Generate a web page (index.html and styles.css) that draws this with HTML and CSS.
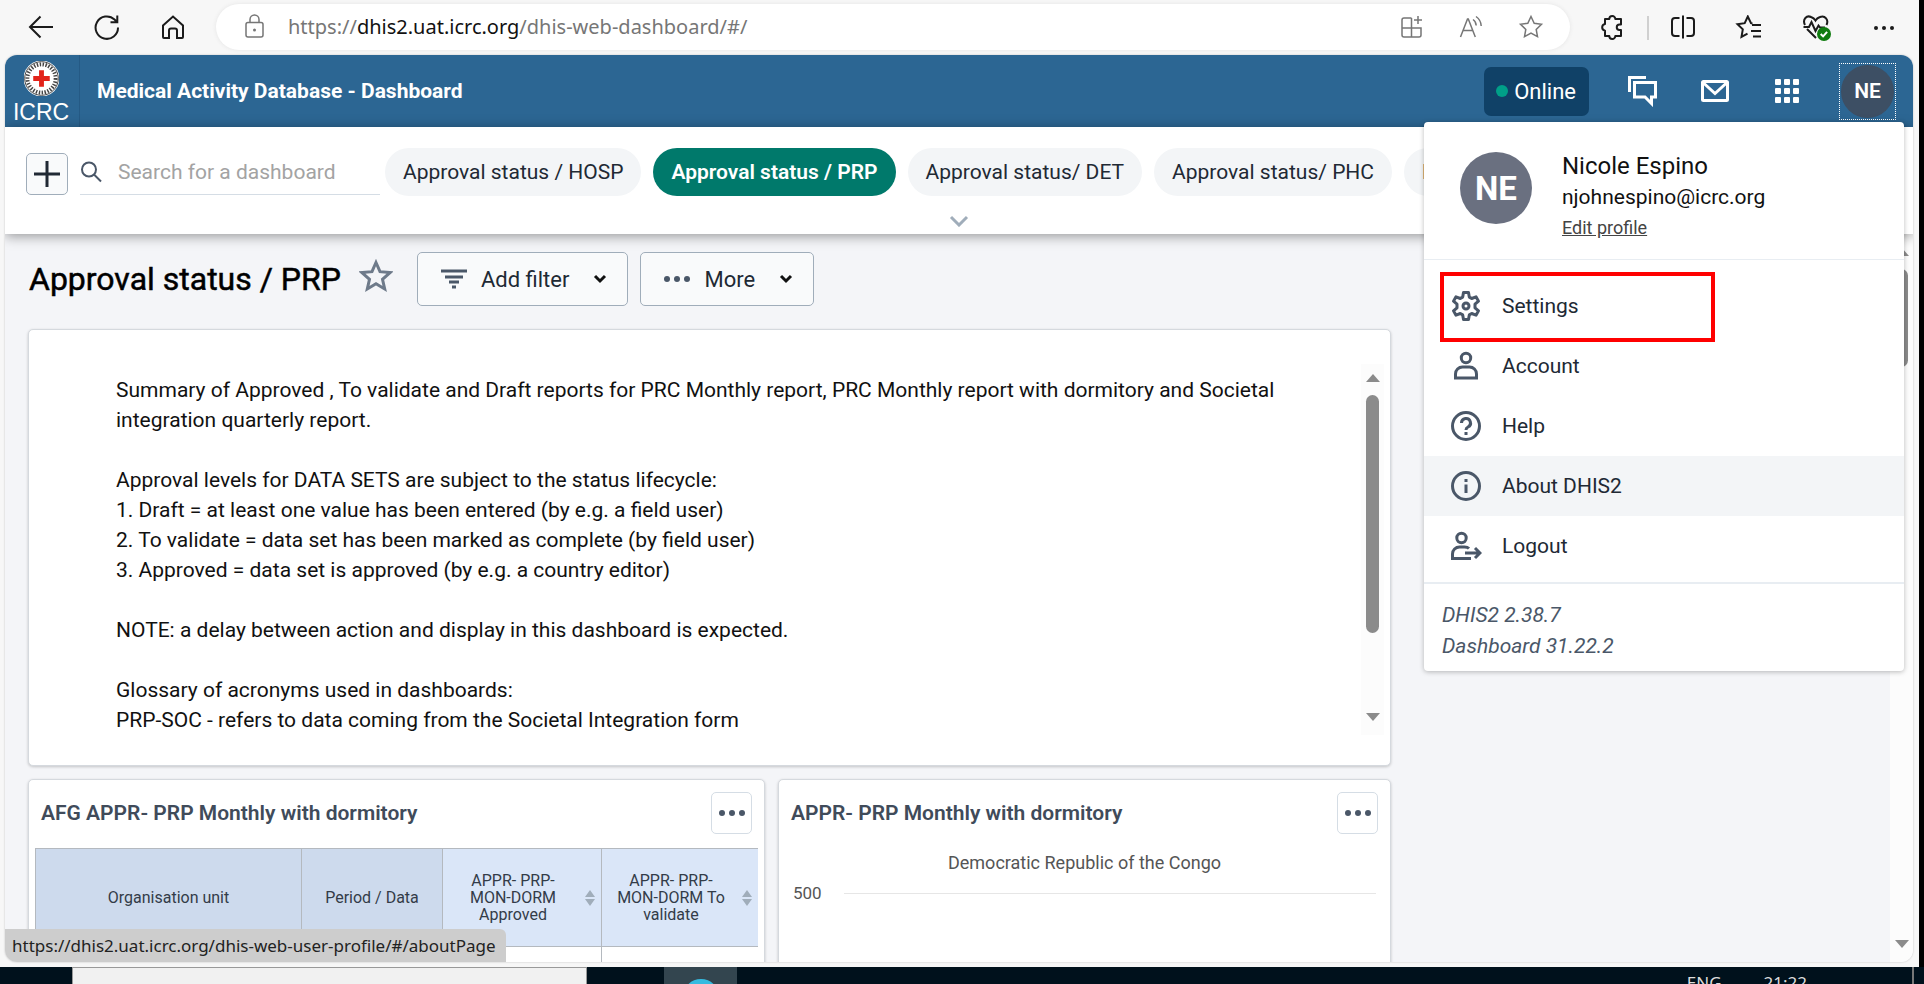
FILE: index.html
```html
<!DOCTYPE html>
<html lang="en">
<head>
<meta charset="utf-8">
<title>Medical Activity Database - Dashboard</title>
<link rel="stylesheet" href="styles.css">
</head>
<body>
<div class="desktop">
<div class="browser">
  <div class="toolbar">
    <nav class="toolbar-nav" aria-label="Browser">
      <button class="icon-btn" aria-label="Back"><svg width="26" height="26" viewBox="0 0 26 26"><path d="M25 12H2M12.500 1.500L2 12l10.500 10.500"/></svg></button>
      <button class="icon-btn" aria-label="Reload"><svg width="26" height="26" viewBox="0 0 26 26"><path d="M24 12.500A11.200 11.200 0 1 1 20.500 4.500L23 7M23.300 .5V7.300H16.500"/></svg></button>
      <button class="icon-btn" aria-label="Home"><svg width="26" height="26" viewBox="0 0 26 26"><path d="M3 10.500L13 1.500l10 9V22a1 1 0 0 1-1 1h-5v-7.500a2 2 0 0 0-2-2h-4a2 2 0 0 0-2 2V23H4a1 1 0 0 1-1-1z"/></svg></button>
    </nav>
    <div class="address">
      <svg class="grey" width="22" height="26" viewBox="0 0 22 26"><rect x="2" y="8.500" width="17" height="14.500" rx="2"/><path d="M6 8.500V5.500a4.500 4.500 0 0 1 9 0v3"/><circle class="fill" cx="10.500" cy="16" r="1.500"/></svg>
      <p class="url">https://<b>dhis2.uat.icrc.org</b>/dhis-web-dashboard/#/</p>
      <button class="icon-btn grey" aria-label="Apps"><svg width="24" height="24" viewBox="0 0 24 24"><path d="M11.500 3H4a2 2 0 0 0-2 2v15a2 2 0 0 0 2 2h15a2 2 0 0 0 2-2v-7H2M11.500 3v19M18 1v8M14 5h8"/></svg></button>
      <button class="icon-btn grey" aria-label="Read aloud"><svg width="24" height="24" viewBox="0 0 24 24"><path d="M1.500 22L8.500 4h.8l7 18M4.200 15.500h9.500M14 4.500q3 2 3.200 6M17 1.500q5 3.500 5.200 9.500"/></svg></button>
      <button class="icon-btn grey" aria-label="Favourite"><svg width="26" height="26" viewBox="0 0 26 26"><path d="M13 2.500l3.200 6.700 7.300 1-5.300 5.200 1.300 7.300-6.500-3.500-6.500 3.500 1.300-7.300-5.300-5.200 7.300-1z"/></svg></button>
    </div>
    <div class="toolbar-tools">
      <button class="icon-btn" aria-label="Extensions"><svg width="26" height="26" viewBox="0 0 26 26"><path stroke-linejoin="round" d="M5 4h4.300a3 3 0 0 1 6 0H21v5.500h-1.500a2.700 2.700 0 0 0 0 5.500H21v6h-5.700a3 3 0 0 1-6 0H5v-5.300a3.400 3.400 0 0 1 0-6.700z"/></svg></button>
      <span class="toolbar-sep"></span>
      <button class="icon-btn" aria-label="Split screen"><svg width="26" height="26" viewBox="0 0 26 26"><path d="M9.500 3H5a3 3 0 0 0-3 3v12a3 3 0 0 0 3 3h4.500M13 .5v23M16.500 3H21a3 3 0 0 1 3 3v12a3 3 0 0 1-3 3h-4.500"/></svg></button>
      <button class="icon-btn" aria-label="Favourites"><svg width="28" height="26" viewBox="0 0 26 26"><path d="M16.500 8.500l-1.500-.3-3.200-6.700-3.100 6.700-7.200 1 5.300 5.200-1.300 7.500 6-3.300M16 10h9M15 16h10M17 21.500h8"/></svg></button>
      <button class="icon-btn" aria-label="Browser essentials"><svg width="30" height="28" viewBox="0 0 30 28"><path d="M3 11C0 5 5 1 9 3q3 1 4.500 3.500Q15 4 18 3c5-2 9 3 6.500 8M5 15l9 9M1.500 13H7l2.500-5 4 9 3-5.500 1.500 2h5"/><circle cx="22" cy="20" r="7" class="ok"/><path class="tick" d="M18.700 20l2.400 2.400 4-4.500"/></svg></button>
      <button class="icon-btn" aria-label="More tools"><svg width="26" height="26" viewBox="0 0 26 26"><g class="fill"><circle cx="5" cy="13" r="2"/><circle cx="13" cy="13" r="2"/><circle cx="21" cy="13" r="2"/></g></svg></button>
    </div>
  </div>

  <div class="page">
    <header class="header">
      <a class="logo" href="#" aria-label="ICRC">
        <svg width="35" height="35" viewBox="0 0 36 36"><circle cx="18" cy="18" r="17.500" fill="#fff"/><circle cx="18" cy="18" r="14.500" fill="none" stroke="#444" stroke-width="4" stroke-dasharray="1.500 1.500"/><circle cx="18" cy="18" r="17.300" fill="none" stroke="#444" stroke-width="1"/><path d="M15.500 9.500h5v6h6v5h-6v6h-5v-6h-6v-5h6z" fill="#e2231a" stroke="none"/></svg>
        <span>ICRC</span>
      </a>
      <h1 class="app-title">Medical Activity Database - Dashboard</h1>
      <span class="online"><i></i>Online</span>
      <nav class="header-icons" aria-label="Apps">
        <button class="icon-btn" aria-label="Messages"><svg width="32" height="32" viewBox="0 0 32 32"><path d="M2.500 17V2.500H19M7.500 7.500h21v14.500h-4v6.500L18 22H7.500z"/></svg></button>
        <button class="icon-btn" aria-label="Mail"><svg width="32" height="32" viewBox="0 0 32 32"><rect x="3.500" y="6.500" width="25" height="19" rx="1"/><path d="M4 7.500l12 11 12-11"/></svg></button>
        <button class="icon-btn" aria-label="Applications"><svg width="32" height="32" viewBox="0 0 32 32"><g class="fill"><rect x="4" y="4" width="6" height="6" rx="1"/><rect x="13" y="4" width="6" height="6" rx="1"/><rect x="22" y="4" width="6" height="6" rx="1"/><rect x="4" y="13" width="6" height="6" rx="1"/><rect x="13" y="13" width="6" height="6" rx="1"/><rect x="22" y="13" width="6" height="6" rx="1"/><rect x="4" y="22" width="6" height="6" rx="1"/><rect x="13" y="22" width="6" height="6" rx="1"/><rect x="22" y="22" width="6" height="6" rx="1"/></g></svg></button>
      </nav>
      <button class="profile"><span>NE</span></button>
    </header>

    <section class="dash-bar">
      <div class="dash-row">
        <button class="add" aria-label="New dashboard"><svg width="28" height="28" viewBox="0 0 28 28"><path d="M14 1v26M1 14h26"/></svg></button>
        <label class="search"><svg width="22" height="22" viewBox="0 0 22 22"><circle cx="9" cy="8.500" r="7"/><path d="M14 13.500l7 7"/></svg><input type="text" placeholder="Search for a dashboard" aria-label="Search for a dashboard"></label>
        <a class="chip" href="#">Approval status / HOSP</a>
        <a class="chip active" href="#">Approval status / PRP</a>
        <a class="chip" href="#">Approval status/ DET</a>
        <a class="chip" href="#">Approval status/ PHC</a>
        <a class="chip" href="#">PRP</a>
      </div>
      <button class="expand" aria-label="Show more dashboards"><svg width="20" height="12" viewBox="0 0 20 12"><path d="M2 2l8 8 8-8"/></svg></button>
    </section>

    <main class="content">
      <div class="board">
        <div class="title-row">
          <h2>Approval status / PRP</h2>
          <button class="icon-btn star" aria-label="Star dashboard"><svg width="34" height="34" viewBox="0 0 34 34"><path d="M17 3.500l4 9.200 10 .9-7.500 6.700 2.200 9.700-8.700-5.200L8.300 30l2.200-9.700L3 13.600l10-.9z"/></svg></button>
          <button class="btn"><svg width="28" height="20" viewBox="0 0 28 20"><path d="M1 2h26M5 8h18M9 13h10M12 18h4"/></svg>Add filter<svg class="caret" width="14" height="10" viewBox="0 0 14 10"><path d="M2 2l5 5 5-5"/></svg></button>
          <button class="btn"><svg class="dots" width="28" height="8" viewBox="0 0 28 8"><circle cx="4" cy="4" r="3"/><circle cx="14" cy="4" r="3"/><circle cx="24" cy="4" r="3"/></svg>More<svg class="caret" width="14" height="10" viewBox="0 0 14 10"><path d="M2 2l5 5 5-5"/></svg></button>
        </div>
        <article class="card text-card">
          <div class="text-body">
            <p>Summary of Approved , To validate and Draft reports for PRC Monthly report, PRC Monthly report with dormitory and Societal integration quarterly report.</p>
            <p>Approval levels for DATA SETS are subject to the status lifecycle:<br>1. Draft = at least one value has been entered (by e.g. a field user)<br>2. To validate = data set has been marked as complete (by field user)<br>3. Approved = data set is approved (by e.g. a country editor)</p>
            <p>NOTE: a delay between action and display in this dashboard is expected.</p>
            <p>Glossary of acronyms used in dashboards:<br>PRP-SOC - refers to data coming from the Societal Integration form</p>
          </div>
          <div class="scroll"><i class="up"></i><i class="thumb"></i><i class="down"></i></div>
        </article>
        <div class="cards">
          <article class="card">
            <div class="card-head"><h3>AFG APPR- PRP Monthly with dormitory</h3><button class="card-menu" aria-label="Item menu"><svg class="dots" width="28" height="8" viewBox="0 0 28 8"><circle cx="4" cy="4" r="3"/><circle cx="14" cy="4" r="3"/><circle cx="24" cy="4" r="3"/></svg></button></div>
            <table class="pivot">
              <thead><tr><th class="dim c1">Organisation unit</th><th class="dim c2">Period / Data</th>
              <th class="c3"><div>APPR- PRP-MON-DORM Approved<span class="sort"></span></div></th><th><div>APPR- PRP-MON-DORM To validate<span class="sort"></span></div></th></tr></thead>
              <tbody><tr><td></td><td></td><td></td><td></td></tr></tbody>
            </table>
          </article>
          <article class="card">
            <div class="card-head"><h3>APPR- PRP Monthly with dormitory</h3><button class="card-menu" aria-label="Item menu"><svg class="dots" width="28" height="8" viewBox="0 0 28 8"><circle cx="4" cy="4" r="3"/><circle cx="14" cy="4" r="3"/><circle cx="24" cy="4" r="3"/></svg></button></div>
            <p class="chart-title">Democratic Republic of the Congo</p>
            <div class="axis"><span>500</span><i></i></div>
          </article>
        </div>
      </div>
      <div class="scroll page-scroll"><i class="up"></i><i class="thumb"></i><i class="down"></i></div>
    </main>
    <div class="status">https://dhis2.uat.icrc.org/dhis-web-user-profile/#/aboutPage</div>
  </div>

  <aside class="menu">
    <div class="user">
      <span class="avatar">NE</span>
      <div><p class="name">Nicole Espino</p><p class="mail">njohnespino@icrc.org</p><a href="#">Edit profile</a></div>
    </div>
    <nav class="items" aria-label="Profile">
      <a href="#"><svg width="32" height="32" viewBox="0 0 32 32"><path stroke-linejoin="round" d="M13.500 2.500h5l.8 4.600 2.400 1.400 4.300-1.700 2.500 4.400-3.500 3v3.600l3.500 3-2.500 4.400-4.300-1.700-2.400 1.400-.8 4.600h-5l-.8-4.600-2.400-1.400L6 25.200l-2.500-4.400 3.500-3v-3.600l-3.500-3L6 6.800l4.300 1.700 2.400-1.400z"/><circle cx="16" cy="16" r="3"/></svg>Settings</a>
      <a href="#"><svg width="32" height="32" viewBox="0 0 32 32"><circle cx="16" cy="8" r="4.700"/><path d="M5.500 28v-4a7 7 0 0 1 7-7h7a7 7 0 0 1 7 7v4z"/></svg>Account</a>
      <a href="#"><svg width="32" height="32" viewBox="0 0 32 32"><circle cx="16" cy="16" r="13.500"/><path d="M11.500 13a4.500 4.500 0 1 1 6.500 4q-2 1-2 3M16 22v3"/></svg>Help</a>
      <a href="#" class="hover"><svg width="32" height="32" viewBox="0 0 32 32"><circle cx="16" cy="16" r="13.500"/><path d="M16 14.500V23M16 9v3"/></svg>About DHIS2</a>
      <a href="#"><svg width="32" height="32" viewBox="0 0 32 32"><circle cx="11.500" cy="8" r="4.700"/><path d="M21 28.500H2.500V24a7 7 0 0 1 7-7h5q3 0 4.500 1.500M15 23h14M25 18l5 5-5 5"/></svg>Logout</a>
      <span class="marker"></span>
    </nav>
    <p class="versions">DHIS2 2.38.7<br>Dashboard 31.22.2</p>
  </aside>
</div>
<footer class="taskbar">
  <span class="task-search"></span>
  <span class="task-app"><i></i></span>
  <span class="lang">ENG</span><time>21:22</time><span class="peek"></span>
</footer>
</div>
</body>
</html>
```
FILE: styles.css
```css
* { box-sizing: border-box; }
body { margin: 0; font-family: Roboto, sans-serif; font-size: 21px; color: #212934; background: #000; }
p, h1, h2, h3 { margin: 0; }
button { font: inherit; color: inherit; padding: 0; border: 0; background: none; }
svg { display: block; flex: none; fill: none; stroke: currentColor; stroke-width: 2; }
.fill, .dots { fill: currentColor; stroke: none; }
.icon-btn { display: flex; align-items: center; justify-content: center; }

.desktop { height: 100vh; display: flex; flex-direction: column; overflow: hidden; }
.browser { position: relative; flex: 1; min-height: 0; display: flex; flex-direction: column; margin-right: 5px; padding: 0 6px 5px 5px; background: #f7f7f7; }

.toolbar { display: flex; align-items: center; height: 55px; flex: none; color: #1b1b1b; }
.toolbar-nav { display: flex; gap: 40px; padding: 0 30px 0 23px; }
.address { flex: 1; display: flex; align-items: center; height: 46px; padding: 0 26px 0 28px; border-radius: 23px; background: #fff; box-shadow: 0 0 4px #e4e4e4; margin-bottom: 2px; }
.address svg { stroke-width: 1.5; }
.grey { color: #767676; }
.url { flex: 1; margin-left: 22px; font-family: "Noto Sans", sans-serif; font-size: 20px; color: #767676; }
.url b { font-weight: 400; color: #111; }
.address .icon-btn { margin-left: 35px; }
.toolbar-tools { display: flex; align-items: center; gap: 39px; padding: 0 16px 0 30px; }
.toolbar-sep { width: 2px; height: 24px; margin: 0 -18px; background: #d0d0d0; }
.ok { fill: #107c10; stroke: none; }
.tick { stroke: #fff; }

.page { position: relative; flex: 1; min-height: 0; display: flex; flex-direction: column; overflow: hidden; border-radius: 12px; background: #f4f5f8; box-shadow: 0 0 2px #bbb; }
.header { display: flex; align-items: center; height: 72px; flex: none; padding-right: 17px; background: #2c6693; color: #fff; }
.logo { display: flex; flex-direction: column; align-items: center; width: 75px; height: 100%; padding: 6px 2px 0 0; border-right: 1px solid #255a85; color: #fff; text-decoration: none; font-size: 23px; line-height: 32px; font-family: "Liberation Sans", sans-serif; }
.app-title { flex: 1; margin-left: 17px; font-size: 21px; font-weight: 700; }
.online { display: flex; align-items: center; gap: 6px; height: 49px; padding: 0 13px 0 12px; border-radius: 7px; background: #104167; font-size: 22px; }
.online i { width: 12px; height: 12px; border-radius: 50%; background: #009f88; }
.header-icons { display: flex; gap: 40px; padding: 0 36px 0 38px; }
.header-icons svg { stroke-width: 3; }
.profile { padding: 1px; border: 1px dotted #fff; font-weight: 600; }
.profile span { display: flex; align-items: center; justify-content: center; width: 53px; height: 53px; border-radius: 50%; background: #3d4f64; }

.dash-bar { position: relative; height: 107px; flex: none; padding: 21px 21px 0; background: #fff; box-shadow: 0 2px 12px #0006; }
.dash-row { display: flex; align-items: center; gap: 12px; overflow: hidden; white-space: nowrap; }
.add { display: flex; align-items: center; justify-content: center; flex: none; width: 42px; height: 42px; margin-top: 4px; border: 1px solid #a0adba; border-radius: 5px; background: #f9fafb; }
.add svg { stroke-width: 3; }
.search { display: flex; align-items: center; flex: none; gap: 16px; width: 300px; height: 46px; border-bottom: 1px solid #d5dde5; color: #4a5768; margin-right: -7px; }
.search input { flex: 1; min-width: 0; padding: 0; border: 0; outline: 0; background: none; font: inherit; }
.search input::placeholder { color: #a3a3a3; }
.chip { flex: none; padding: 0 18px; border-radius: 24px; background: #f3f5f7; color: #212934; line-height: 48px; text-decoration: none; }
.chip.active { background: #00796b; color: #fff; font-weight: 600; }
.expand { display: flex; margin: 19px auto 0; color: #a0adba; }
.expand svg { stroke-width: 3; }

.content { flex: 1; min-height: 0; display: flex; }
.board { flex: 1; min-width: 0; padding: 18px 499px 0 23px; overflow: hidden; }
.title-row { display: flex; align-items: center; gap: 12px; height: 54px; margin-bottom: 23px; padding-left: 1px; }
h2 { font-size: 32px; font-weight: 400; color: #000; -webkit-text-stroke: 0.5px #000; }
.star { color: #6e7a8a; margin: 0 12px 6px 6px; }
.star svg { stroke-width: 3; }
.btn { display: flex; align-items: center; gap: 13px; height: 54px; padding: 0 20px 0 22px; border: 1px solid #a0adba; border-radius: 5px; background: #f9fafb; font-size: 22px; }
.btn svg { color: #4a5768; stroke-width: 3; }
.btn .caret { color: #111; margin-left: 11px; }
.dots { stroke: none; color: #4a5768; }
.card { background: #fff; border: 1px solid #d5d9de; border-radius: 5px; box-shadow: 0 1px 3px #0003; }
.text-card { display: flex; height: 437px; padding: 34px 6px 30px 87px; margin-bottom: 13px; }
.text-body { flex: 1; padding: 11px 60px 0 0; overflow: hidden; line-height: 30px; color: #111; }
.text-body p { margin-bottom: 30px; }
.scroll { display: flex; flex-direction: column; align-items: center; flex: none; width: 23px; padding: 10px 0 14px; background: #fcfcfc; }
.up, .down { border: 7px solid transparent; }
.up { border-top: 0; border-bottom: 8px solid #8b8b8b; }
.down { border-bottom: 0; border-top: 8px solid #8b8b8b; margin-top: auto; }
.thumb { width: 13px; height: 238px; margin-top: 13px; border-radius: 7px; background: #8b8b8b; }
.page-scroll { padding: 14px 0; }
.page-scroll .thumb { height: 98px; }
.cards { display: grid; grid-template-columns: 737fr 613fr; gap: 13px; }
.cards .card { height: 330px; padding: 12px 6px; }
.card-head { display: flex; align-items: center; justify-content: space-between; padding: 0 6px; margin-bottom: 14px; }
h3 { font-size: 21px; font-weight: 600; color: #404b5a; }
.card-menu { display: flex; align-items: center; justify-content: center; width: 41px; height: 42px; border: 1px solid #d5dde5; border-radius: 5px; background: #fff; }
.pivot { width: 100%; table-layout: fixed; border-collapse: collapse; font-size: 16px; }
.pivot th { height: 98px; padding: 0; border: 1px solid #b4b9bf; background: #dae6f8; font-weight: 400; line-height: 17px; color: #333c48; }
.pivot td { height: 40px; border: 1px solid #b4b9bf; }
.pivot th:last-child, .pivot td:last-child { border-right: 0; }
.pivot .dim { background: #cddaed; }
.c1 { width: 266px; }
.c2 { width: 141px; }
.c3 { width: 159px; }
.pivot div { position: relative; padding: 0 28px 0 10px; }
.sort { position: absolute; right: 6px; top: 50%; width: 10px; height: 16px; margin-top: -8px; }
.sort::before, .sort::after { content: ""; position: absolute; left: 0; border: 5px solid transparent; }
.sort::before { top: 0; border-top: 0; border-bottom: 7px solid #a0adba; }
.sort::after { bottom: 0; border-bottom: 0; border-top: 7px solid #a0adba; }
.chart-title { text-align: center; font-size: 18px; line-height: 30px; color: #555; }
.axis { display: flex; align-items: center; gap: 22px; padding: 5px 8px; font-size: 17px; color: #555; }
.axis i { flex: 1; height: 1px; background: #e6e6e6; }
.status { position: absolute; left: 0; bottom: 0; height: 33px; padding: 0 10px 0 7px; border-radius: 0 6px 0 0; background: #cdcdcd; font-family: "Noto Sans", sans-serif; font-size: 17px; line-height: 33px; color: #222; }

.menu { position: absolute; top: 122px; right: 15px; width: 480px; background: #fff; border-radius: 4px; box-shadow: 0 1px 5px #0004; }
.user { display: flex; gap: 30px; height: 138px; padding: 30px 36px 0; border-bottom: 1px solid #e8edf2; color: #111; }
.avatar { display: flex; align-items: center; justify-content: center; width: 72px; height: 72px; border-radius: 50%; background: #6a7080; color: #fff; font-size: 33px; font-weight: 700; }
.name { font-size: 24px; line-height: 29px; }
.mail { line-height: 32px; }
.user a { display: block; font-size: 18px; line-height: 29px; color: #444; }
.items { position: relative; padding: 16px 0 6px; border-bottom: 2px solid #e8edf2; }
.items a { display: flex; align-items: center; gap: 20px; height: 60px; padding-left: 26px; color: #212934; text-decoration: none; }
.items svg { color: #4a5768; stroke-width: 3; }
.items .hover { background: #f3f5f7; }
.marker { position: absolute; left: 16px; top: 12px; width: 275px; height: 70px; border: 4px solid #f00; }
.versions { padding: 16px 18px 9px; font-style: italic; line-height: 31px; color: #4a5768; }

.taskbar { display: flex; height: 17px; flex: none; overflow: hidden; padding-left: 72px; background: #00111c; color: #ddd; font-family: "Noto Sans", sans-serif; font-size: 17px; line-height: 20px; }
.task-search { width: 515px; background: #f1f1f1; border: 1px solid #999; border-bottom: 0; }
.task-app { width: 73px; margin: 0 auto 0 77px; background: #33454f; }
.task-app i { display: block; width: 36px; height: 36px; margin: 12px auto 0; border-radius: 50%; background: #35bbe0; }
.lang, time { padding-top: 6px; }
time { margin: 0 105px 0 42px; }
.peek { width: 2px; margin-right: 10px; background: #777; }
```
